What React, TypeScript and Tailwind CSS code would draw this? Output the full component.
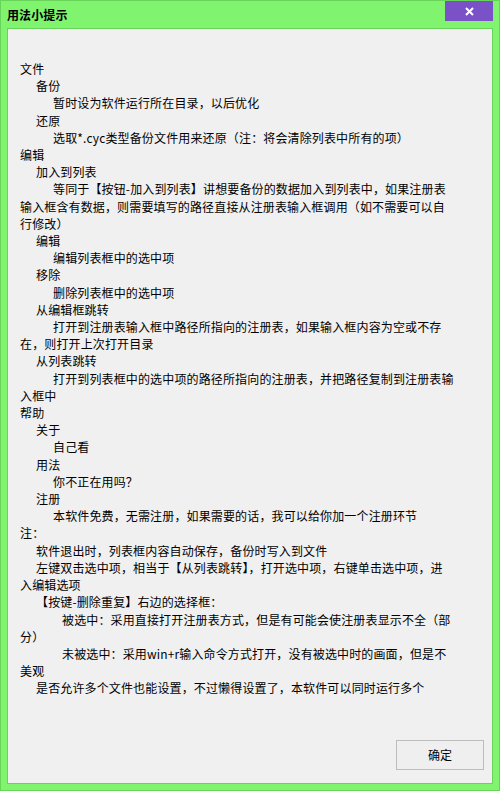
const FONT = '"Microsoft YaHei", "Noto Sans CJK SC", "Noto Sans", sans-serif';

// [indent level, text] — each row is one visual line of the help text
const lines: [number, string][] = [
  [0, '文件'],
  [1, '备份'],
  [2, '暂时设为软件运行所在目录，以后优化'],
  [1, '还原'],
  [2, '选取*.cyc类型备份文件用来还原（注：将会清除列表中所有的项）'],
  [0, '编辑'],
  [1, '加入到列表'],
  [2, '等同于【按钮-加入到列表】讲想要备份的数据加入到列表中，如果注册表'],
  [0, '输入框含有数据，则需要填写的路径直接从注册表输入框调用（如不需要可以自'],
  [0, '行修改）'],
  [1, '编辑'],
  [2, '编辑列表框中的选中项'],
  [1, '移除'],
  [2, '删除列表框中的选中项'],
  [1, '从编辑框跳转'],
  [2, '打开到注册表输入框中路径所指向的注册表，如果输入框内容为空或不存'],
  [0, '在，则打开上次打开目录'],
  [1, '从列表跳转'],
  [2, '打开到列表框中的选中项的路径所指向的注册表，并把路径复制到注册表输'],
  [0, '入框中'],
  [0, '帮助'],
  [1, '关于'],
  [2, '自己看'],
  [1, '用法'],
  [2, '你不正在用吗？'],
  [1, '注册'],
  [2, '本软件免费，无需注册，如果需要的话，我可以给你加一个注册环节'],
  [0, '注：'],
  [1, '软件退出时，列表框内容自动保存，备份时写入到文件'],
  [1, '左键双击选中项，相当于【从列表跳转】，打开选中项，右键单击选中项，进'],
  [0, '入编辑选项'],
  [1, '【按键-删除重复】右边的选择框：'],
  [3, '被选中：采用直接打开注册表方式，但是有可能会使注册表显示不全（部'],
  [0, '分）'],
  [3, '未被选中：采用win+r输入命令方式打开，没有被选中时的画面，但是不'],
  [0, '美观'],
  [1, '是否允许多个文件也能设置，不过懒得设置了，本软件可以同时运行多个'],
];

const indent = ['pl-0', 'pl-[16px]', 'pl-[33px]', 'pl-[42px]'];

export default function App() {
  return (
    <div
      className="w-[500px] h-[791px] bg-[#80f46f] border border-[#69d45a] flex flex-col"
      style={{ fontFamily: FONT }}
    >
      {/* Title bar */}
      <div className="h-[27px] flex items-start justify-between">
        <div className="pl-[6px] pt-[5px] text-[12px] leading-[17px] font-bold text-black tracking-[0.1px]">
          用法小提示
        </div>
        <button className="mr-[6px] w-[48px] h-[20px] bg-[#7a51c6] flex items-center justify-center">
          <svg width="9" height="9" viewBox="0 0 9 9">
            <path d="M1 1 L8 8 M8 1 L1 8" stroke="#fff" strokeWidth="2" />
          </svg>
        </button>
      </div>

      {/* Client area */}
      <div className="mx-[6px] mb-[6px] flex-1 border border-[#69d45a] bg-[#f0f0f0] flex flex-col">
        <div className="flex-1 pt-[31px] pl-[12px] text-[12px] leading-[17.2px] tracking-[0.14px] text-black">
          {lines.map(([lvl, text], i) => (
            <div key={i} className={`${indent[lvl]} whitespace-nowrap`}>
              {text}
            </div>
          ))}
        </div>
        <div className="flex justify-end pr-[8px] pb-[13px]">
          <button className="w-[88px] h-[30px] border border-[#bdbdbd] bg-[#efefef] text-[12px] text-black">
            确定
          </button>
        </div>
      </div>
    </div>
  );
}
